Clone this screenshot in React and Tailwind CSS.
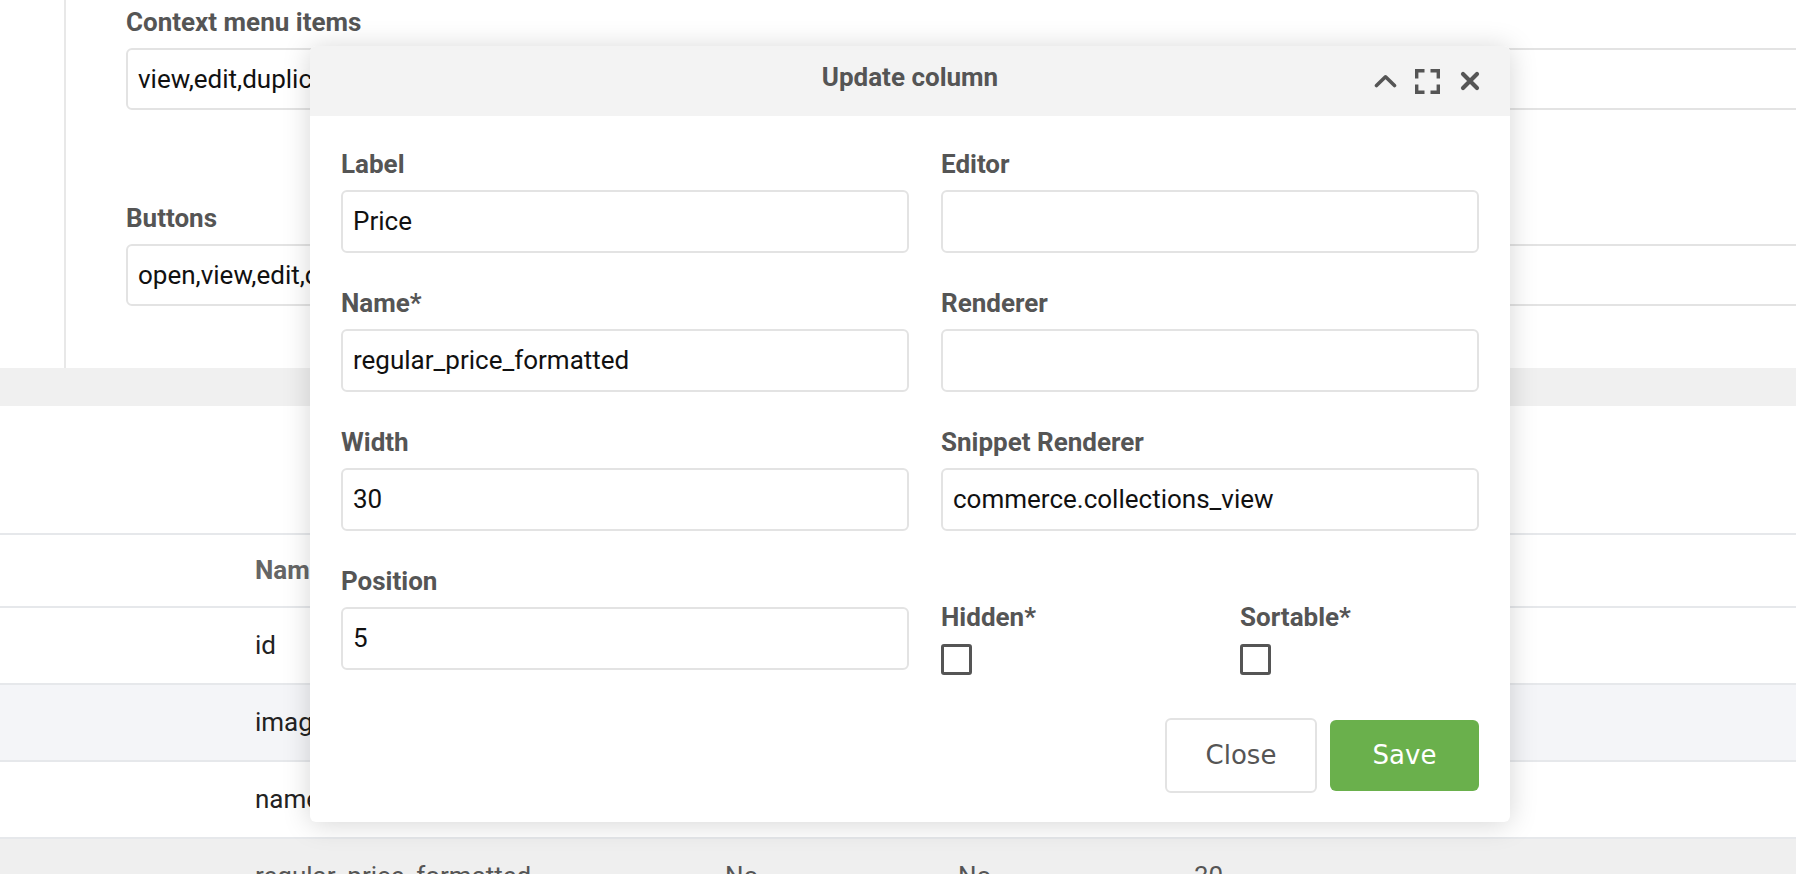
import React from "react";

const fields = [
  { label: "Label", value: "Price" },
  { label: "Editor", value: "" },
  { label: "Name*", value: "regular_price_formatted" },
  { label: "Renderer", value: "" },
  { label: "Width", value: "30" },
  { label: "Snippet Renderer", value: "commerce.collections_view" },
];

const rows = [
  { name: "id", label: "ID", hidden: "No", sortable: "Yes", width: "10", bg: "bg-white" },
  { name: "image", label: "Image", hidden: "No", sortable: "No", width: "20", bg: "bg-[#f4f5f8]" },
  { name: "name", label: "Name", hidden: "No", sortable: "Yes", width: "40", bg: "bg-white" },
  { name: "regular_price_formatted", label: "Price", hidden: "No", sortable: "No", width: "30", bg: "bg-[#efefef]" },
];

const FieldLabel = ({ children }) => (
  <div className="h-[30px] leading-[30px] text-[26px] font-bold text-[#555] mb-[11px] whitespace-nowrap">
    {children}
  </div>
);

const TextInput = ({ value, className = "" }) => (
  <div
    className={`h-[63px] border-2 border-[#e3e3e3] rounded-md bg-white flex items-center pl-[10px] text-[26px] text-[#111] whitespace-nowrap overflow-hidden ${className}`}
  >
    {value}
  </div>
);

const Checkbox = () => (
  <div className="w-[31px] h-[31px] border-[3px] border-[#555] rounded-[3px] bg-white" />
);

const App = () => {
  return (
    <div className="relative w-[1796px] h-[874px] overflow-hidden bg-white font-['Roboto',sans-serif]">
      {/* background settings */}
      <div className="flex h-[368px]">
        <div className="w-[66px] shrink-0 border-r-2 border-[#e8e8e8]" />
        <div className="pl-[60px] pt-[7px] shrink-0">
          <FieldLabel>Context menu items</FieldLabel>
          <div className="w-[1700px] h-[62px] border-2 border-[#e3e3e3] rounded-md flex items-center pl-[10px] text-[26px] text-[#111]">
            view,edit,duplicate,delete
          </div>
          <div className="mt-[93px]">
            <FieldLabel>Buttons</FieldLabel>
            <div className="w-[1700px] h-[62px] border-2 border-[#e3e3e3] rounded-md flex items-center pl-[10px] text-[26px] text-[#111]">
              open,view,edit,duplicate,delete
            </div>
          </div>
        </div>
      </div>
      <div className="h-[38px] bg-[#f0f0f0]" />
      <div className="h-[127px]" />

      {/* columns table */}
      <div className="border-t-2 border-[#e6e8eb]">
        <div className="flex items-center h-[73px] border-b-2 border-[#e6e8eb] text-[26px] font-bold text-[#666]">
          <div className="w-[255px] shrink-0" />
          <div className="w-[470px] shrink-0">Name</div>
          <div className="w-[233px] shrink-0">Hidden</div>
          <div className="w-[236px] shrink-0">Sortable</div>
          <div>Width</div>
        </div>
        {rows.map((r, i) => (
          <div
            key={i}
            className={`flex items-center h-[77px] border-b-2 border-[#e6e8eb] text-[26px] ${r.bg} ${
              i === 3 ? "text-[#555]" : "text-[#222]"
            }`}
          >
            <div className="w-[255px] shrink-0" />
            <div className="w-[470px] shrink-0">{r.name}</div>
            <div className="w-[233px] shrink-0">{r.hidden}</div>
            <div className="w-[236px] shrink-0">{r.sortable}</div>
            <div>{r.width}</div>
          </div>
        ))}
      </div>

      {/* modal */}
      <div className="absolute left-[310px] top-[46px] w-[1200px] h-[776px] bg-white rounded-md shadow-[0_2px_28px_rgba(0,0,0,0.17)] flex flex-col">
        <div className="relative h-[70px] bg-[#f3f3f3] rounded-t-md flex justify-center pt-[16px]">
          <div className="h-[30px] leading-[30px] text-[26px] font-bold text-[#555]">
            Update column
          </div>
          <div className="absolute right-[30px] top-0 bottom-0 flex items-center text-[#555]">
            <svg width="23" height="14" viewBox="0 0 23 14" fill="none" stroke="currentColor" strokeWidth="3.6" strokeLinecap="round" strokeLinejoin="round">
              <path d="M2.5 11.5 L11.5 2.8 L20.5 11.5" />
            </svg>
            <svg className="ml-[18px]" width="25" height="25" viewBox="0 0 25 25" fill="none" stroke="currentColor" strokeWidth="3.4">
              <path d="M1.7 9.5 V1.7 H9.5 M15.5 1.7 H23.3 V9.5 M23.3 15.5 V23.3 H15.5 M9.5 23.3 H1.7 V15.5" />
            </svg>
            <svg className="ml-[20px]" width="20" height="20" viewBox="0 0 20 20" fill="none" stroke="currentColor" strokeWidth="4.2" strokeLinecap="round">
              <path d="M3 3 L17 17 M17 3 L3 17" />
            </svg>
          </div>
        </div>

        <div className="px-[31px] pt-[33px]">
          <div className="grid grid-cols-[568px_538px] gap-x-[32px] gap-y-[35px]">
            {fields.map((f) => (
              <div key={f.label}>
                <FieldLabel>{f.label}</FieldLabel>
                <TextInput value={f.value} />
              </div>
            ))}
            <div>
              <FieldLabel>Position</FieldLabel>
              <TextInput value="5" />
            </div>
            <div className="grid grid-cols-[299px_1fr] mt-[36px]">
              <div>
                <div className="h-[30px] leading-[30px] text-[26px] font-bold text-[#555] mb-[12px]">Hidden*</div>
                <Checkbox />
              </div>
              <div>
                <div className="h-[30px] leading-[30px] text-[26px] font-bold text-[#555] mb-[12px]">Sortable*</div>
                <Checkbox />
              </div>
            </div>
          </div>

          <div className="flex justify-end items-center gap-[13px] mt-[43px] font-['DejaVu_Sans',sans-serif] text-[26px]">
            <button className="w-[152px] h-[75px] border-2 border-[#e3e3e3] rounded-md bg-white text-[#555]">
              Close
            </button>
            <button className="w-[149px] h-[71px] rounded-md bg-[#6ab04c] text-white">
              Save
            </button>
          </div>
        </div>
      </div>
    </div>
  );
};

export default App;
